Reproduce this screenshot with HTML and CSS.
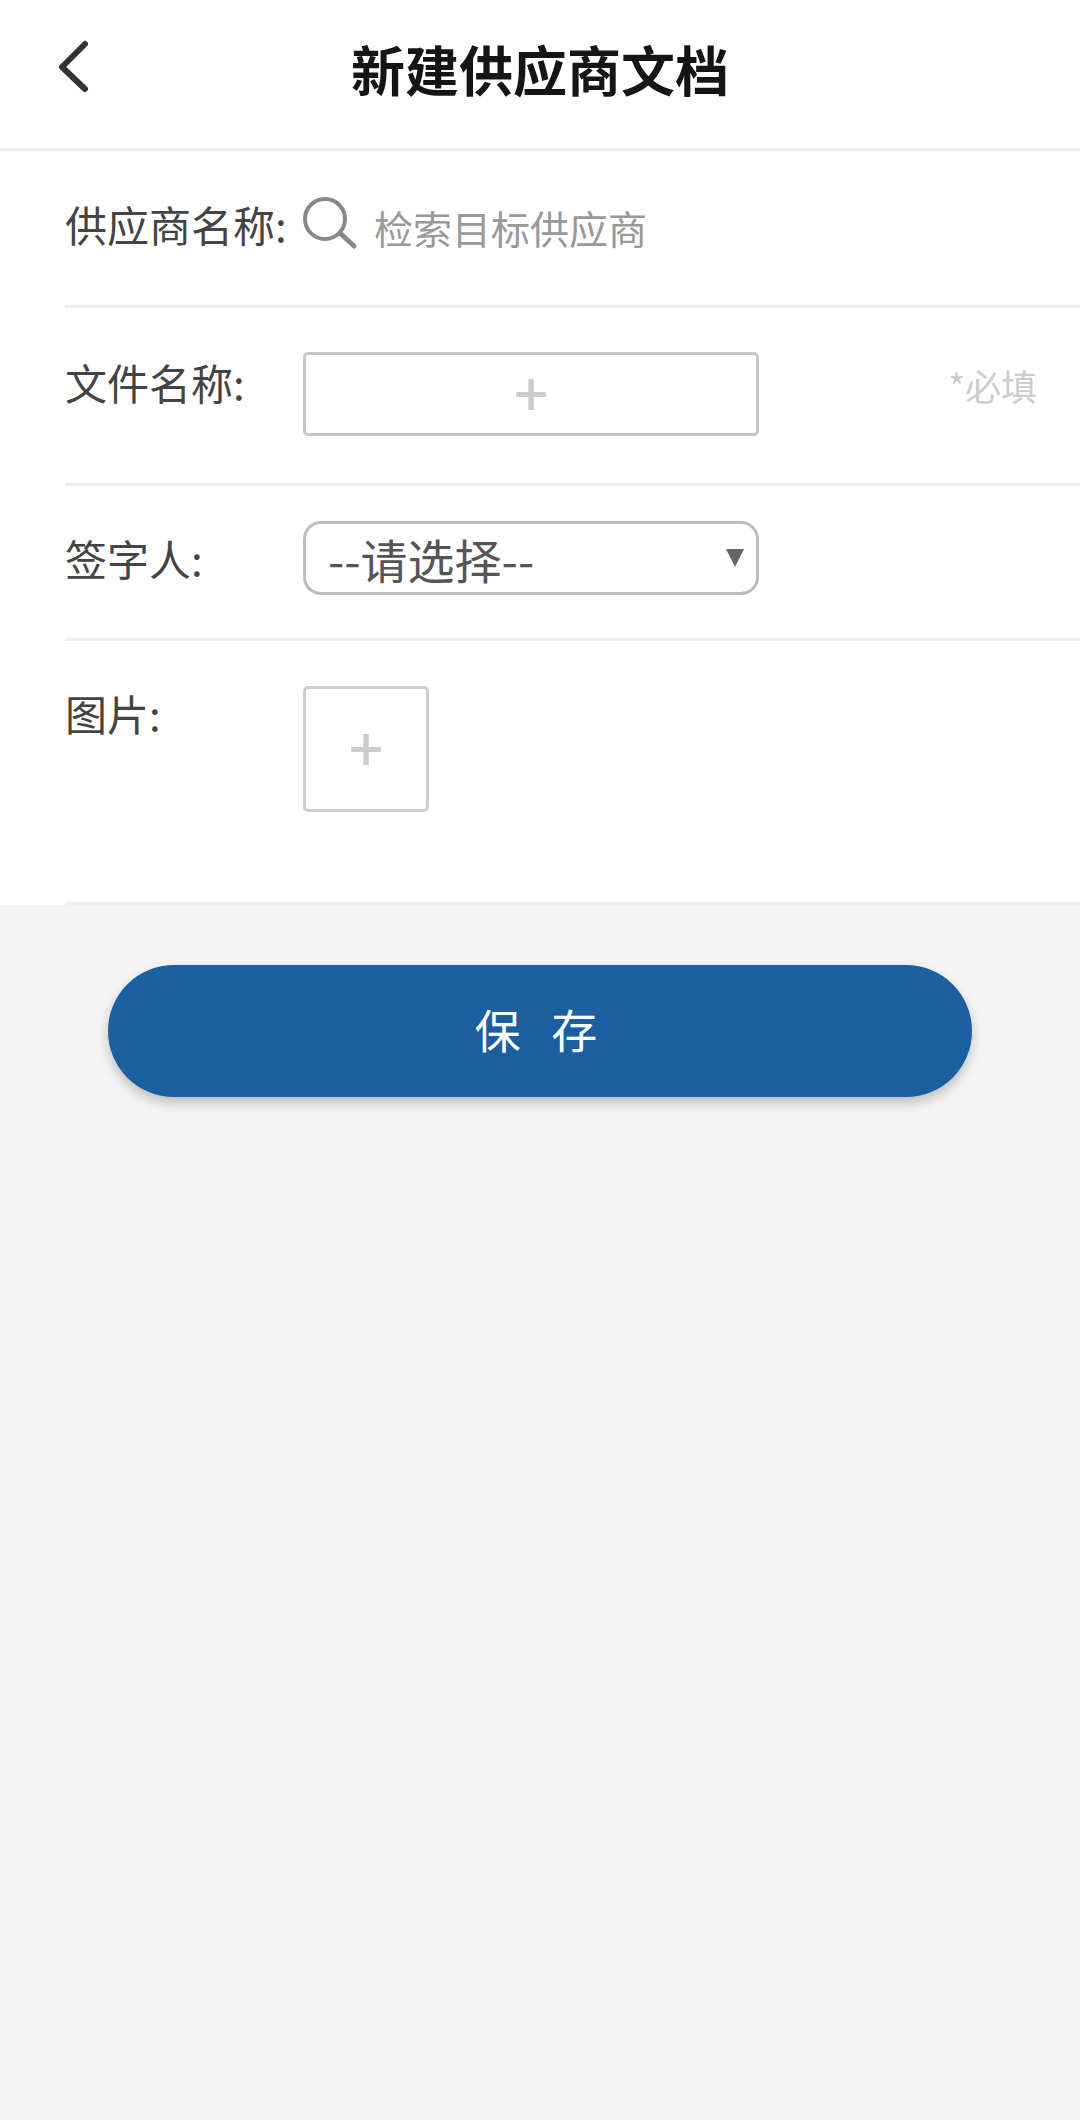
FILE: index.html
```html
<!DOCTYPE html>
<html lang="zh-CN">
<head>
    <meta charset="UTF-8">
    <meta name="viewport" content="width=device-width, initial-scale=1.0">
    <title>新建供应商文档</title>
    <link rel="stylesheet" href="styles.css">
</head>
<body>
    <header class="topbar">
        <svg class="back-icon" width="40" height="60" viewBox="0 0 40 60">
            <path d="M27 7 L4 30 L27 52" fill="none" stroke="#333" stroke-width="6" stroke-linecap="round" stroke-linejoin="round"/>
        </svg>
        <h1 class="title">新建供应商文档</h1>
    </header>

    <section class="form">
        <div class="row row-supplier">
            <span class="label">供应商名称:</span>
            <svg class="search-icon" width="56" height="56" viewBox="0 0 56 56">
                <circle cx="22" cy="22" r="20" fill="none" stroke="#888" stroke-width="4"/>
                <path d="M37 36 L51 49" fill="none" stroke="#888" stroke-width="5" stroke-linecap="round"/>
            </svg>
            <span class="placeholder">检索目标供应商</span>
        </div>
        <div class="row row-file">
            <span class="label">文件名称:</span>
            <div class="file-box"><span class="plus">+</span></div>
            <span class="required">*必填</span>
        </div>
        <div class="row row-signer">
            <span class="label">签字人:</span>
            <div class="select-box">
                <span>--请选择--</span>
                <i class="arrow"></i>
            </div>
        </div>
        <div class="row row-image">
            <span class="label">图片:</span>
            <div class="image-box"><span class="plus">+</span></div>
        </div>
    </section>

    <button class="save-btn">保 存</button>
</body>
</html>
```

FILE: styles.css
```css
* {
    box-sizing: border-box;
}
html, body {
    margin: 0;
    padding: 0;
}
body {
    width: 1080px;
    min-height: 2120px;
    background-color: #f4f4f4;
    font-family: "Noto Sans CJK SC", "Noto Sans", sans-serif;
    overflow: hidden;
}
.topbar {
    height: 151px;
    background-color: #fff;
    border-bottom: 3px solid #eee;
    display: flex;
    align-items: flex-start;
    padding: 37px 0 0 58px;
}
.back-icon {
    display: block;
}
.title {
    margin: -3px 0 0 253px;
    font-size: 54px;
    line-height: 70px;
    font-weight: 700;
    color: #151515;
    white-space: nowrap;
}
.form {
    background-color: #fff;
    height: 754px;
    padding-left: 65px;
}
.row {
    display: flex;
    align-items: flex-start;
    border-bottom: 3px solid #eee;
}
.label {
    flex: none;
    width: 238px;
    margin-top: -3px;
    font-size: 42px;
    line-height: 60px;
    color: #444;
    white-space: nowrap;
}
.row-supplier {
    height: 157px;
    padding-top: 46px;
}
.search-icon {
    flex: none;
    display: block;
}
.placeholder {
    margin-left: 15px;
    font-size: 39px;
    line-height: 60px;
    color: #999;
    white-space: nowrap;
}
.row-file {
    height: 178px;
    padding-top: 47px;
}
.file-box {
    width: 456px;
    height: 84px;
    margin-top: -3px;
    border: 3px solid #c6c6c6;
    border-radius: 5px;
    display: flex;
    align-items: center;
    justify-content: center;
}
.plus {
    margin-top: -6px;
    font-size: 60px;
    line-height: 1;
    color: #ccc;
    font-weight: 500;
}
.required {
    margin-left: auto;
    padding-right: 43px;
    font-size: 36px;
    line-height: 60px;
    color: #ccc;
    white-space: nowrap;
}
.row-signer {
    height: 155px;
    padding-top: 35px;
}
.row-signer .label {
    padding-top: 10px;
}
.select-box {
    width: 456px;
    height: 74px;
    border: 3px solid #bdbdbd;
    border-radius: 18px;
    padding: 0 22px;
    display: flex;
    align-items: center;
    justify-content: space-between;
    font-size: 47px;
    color: #555;
    white-space: nowrap;
}
.arrow {
    width: 0;
    height: 0;
    margin-right: -10px;
    border-left: 9px solid transparent;
    border-right: 9px solid transparent;
    border-top: 18px solid #666;
}
.row-image {
    height: 264px;
    padding-top: 45px;
}
.image-box {
    width: 126px;
    height: 126px;
    border: 3px solid #cdcdcd;
    border-radius: 5px;
    display: flex;
    align-items: center;
    justify-content: center;
}
.save-btn {
    display: block;
    width: 864px;
    height: 132px;
    margin: 60px 0 0 108px;
    padding: 0 0 6px;
    border: none;
    border-radius: 66px;
    background-color: #1a60a0;
    color: #fff;
    font-family: inherit;
    font-size: 46px;
    letter-spacing: 8px;
    word-spacing: 4px;
    box-shadow: 0 6px 12px rgba(0, 0, 0, 0.22);
}
```
